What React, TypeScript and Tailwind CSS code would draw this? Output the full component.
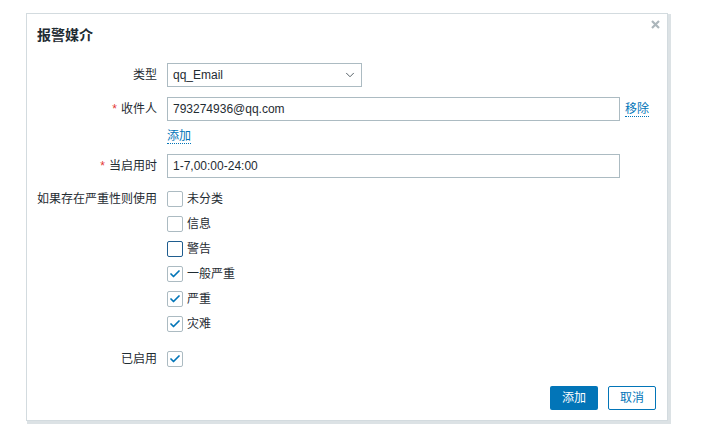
import { Check, ChevronDown } from "lucide-react";

const font = "font-['Liberation_Sans','Noto_Sans_CJK_SC',sans-serif]";

function Box({ checked, focus }: { checked?: boolean; focus?: boolean }) {
  return (
    <span
      className={
        "flex h-4 w-4 shrink-0 items-center justify-center rounded-[2px] border bg-white " +
        (focus ? "border-[#1f5d8f]" : "border-[#acbbc2]")
      }
    >
      {checked && <Check className="h-3 w-3 text-[#0275b8]" strokeWidth={3.5} />}
    </span>
  );
}

const severities = [
  { name: "未分类", checked: false },
  { name: "信息", checked: false },
  { name: "警告", checked: false, focus: true },
  { name: "一般严重", checked: true },
  { name: "严重", checked: true },
  { name: "灾难", checked: true },
];

function Row({
  label,
  required,
  className,
  children,
}: {
  label: string;
  required?: boolean;
  className?: string;
  children: React.ReactNode;
}) {
  return (
    <div className={"flex gap-[10px] " + (className ?? "")}>
      <div className="flex h-6 w-[120px] shrink-0 items-center justify-end">
        {required && <span className="mr-[4px] text-[#e33734]">*</span>}
        {label}
      </div>
      {children}
    </div>
  );
}

export default function App() {
  return (
    <div className={"h-[434px] w-[707px] bg-white pl-[26px] pt-[13px] text-[12px] text-[#1f2c33] " + font}>
      <div className="relative flex h-[408px] w-[642px] flex-col border border-[#d3dbdf] bg-white shadow-[2px_2px_0_1px_#dce2e5]">
        <div className="flex h-[43px] items-center pl-[10px] text-[14px] font-bold text-[#1f2c33]">
          报警媒介
        </div>
        <button className="absolute right-[4px] top-[2px] flex h-4 w-4 items-center justify-center">
          <svg width="9" height="9" viewBox="0 0 9 9">
            <path d="M1 1L8 8M8 1L1 8" stroke="#acb6bb" strokeWidth="2.2" />
          </svg>
        </button>

        <div className="flex flex-1 flex-col pl-[10px] pt-[6px]">
          <Row label="类型">
            <div className="flex h-6 w-[195px] items-center justify-between border border-[#acbbc2] pl-[5px] pr-[4px]">
              <span>qq_Email</span>
              <ChevronDown className="h-[14px] w-[14px] text-[#4a565c]" strokeWidth={1.6} />
            </div>
          </Row>

          <Row label="收件人" required className="mt-[10px]">
            <div className="flex h-6 w-[453px] items-center border border-[#acbbc2] pl-[5px]">
              793274936@qq.com
            </div>
            <a className="ml-[-5px] flex h-6 items-center">
              <span className="border-b border-dotted border-[#0275b8] leading-[14px] text-[#0275b8]">移除</span>
            </a>
          </Row>

          <div className="mt-[6px] flex h-[18px] items-center pl-[130px]">
            <span className="border-b border-dotted border-[#0275b8] leading-[14px] text-[#0275b8]">添加</span>
          </div>

          <Row label="当启用时" required className="mt-[9px]">
            <div className="flex h-6 w-[453px] items-center border border-[#acbbc2] pl-[5px]">
              1-7,00:00-24:00
            </div>
          </Row>

          <div className="mt-[13px] flex gap-[10px]">
            <div className="flex h-4 w-[120px] shrink-0 items-center justify-end">如果存在严重性则使用</div>
            <div className="flex flex-col gap-[9px]">
              {severities.map((s) => (
                <label key={s.name} className="flex h-4 items-center gap-[4px]">
                  <Box checked={s.checked} focus={s.focus} />
                  <span>{s.name}</span>
                </label>
              ))}
            </div>
          </div>

          <div className="mt-[19px] flex gap-[10px]">
            <div className="flex h-4 w-[120px] shrink-0 items-center justify-end">已启用</div>
            <Box checked />
          </div>
        </div>

        <div className="flex justify-end gap-[10px] pb-[10px] pr-[11px]">
          <button className="h-6 w-[48px] rounded-[2px] bg-[#0275b8] text-white">添加</button>
          <button className="h-6 w-[48px] rounded-[2px] border border-[#0275b8] bg-white text-[#0275b8]">取消</button>
        </div>
      </div>
    </div>
  );
}
